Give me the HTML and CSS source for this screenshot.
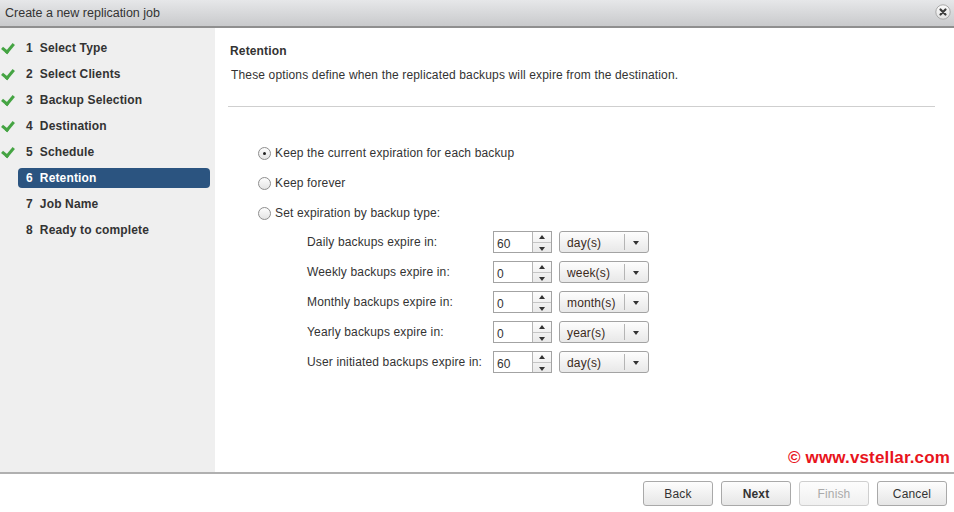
FILE: index.html
```html
<!DOCTYPE html>
<html lang="en">
<head>
    <meta charset="UTF-8">
    <title>Create a new replication job</title>
    <link rel="stylesheet" href="styles.css">
</head>
<body>
    <div class="dialog">
        <div class="titlebar">
            <span class="title">Create a new replication job</span>
            <span class="close">
                <svg width="16" height="16" viewBox="0 0 16 16">
                    <defs>
                        <linearGradient id="closeFill" x1="0" y1="0" x2="0" y2="1">
                            <stop offset="0" stop-color="#fbfbfb"/>
                            <stop offset="1" stop-color="#e2e2e2"/>
                        </linearGradient>
                    </defs>
                    <circle cx="8" cy="8" r="7.2" fill="url(#closeFill)" stroke="#a9a9a9" stroke-width="1"/>
                    <path d="M5.5 5.5 L10.5 10.5 M10.5 5.5 L5.5 10.5" stroke="#3c3c3c" stroke-width="2.2" stroke-linecap="round"/>
                </svg>
            </span>
        </div>

        <div class="body">
            <ul class="steps">
                <li class="step done"><span class="check"></span><span class="step-label"><b>1</b>Select Type</span></li>
                <li class="step done"><span class="check"></span><span class="step-label"><b>2</b>Select Clients</span></li>
                <li class="step done"><span class="check"></span><span class="step-label"><b>3</b>Backup Selection</span></li>
                <li class="step done"><span class="check"></span><span class="step-label"><b>4</b>Destination</span></li>
                <li class="step done"><span class="check"></span><span class="step-label"><b>5</b>Schedule</span></li>
                <li class="step current"><span class="check"></span><span class="step-label"><b>6</b>Retention</span></li>
                <li class="step"><span class="check"></span><span class="step-label"><b>7</b>Job Name</span></li>
                <li class="step"><span class="check"></span><span class="step-label"><b>8</b>Ready to complete</span></li>
            </ul>

            <div class="content">
                <h2 class="heading">Retention</h2>
                <p class="desc">These options define when the replicated backups will expire from the destination.</p>
                <hr class="divider">

                <div class="options">
                    <label class="option"><span class="radio checked"></span>Keep the current expiration for each backup</label>
                    <label class="option"><span class="radio"></span>Keep forever</label>
                    <label class="option"><span class="radio"></span>Set expiration by backup type:</label>
                </div>

                <div class="expiry">
                    <div class="expiry-row">
                        <span class="expiry-label">Daily backups expire in:</span>
                        <span class="spinner"><span class="spin-value">60</span><span class="spin-btns"><span class="up"></span><span class="down"></span></span></span>
                        <span class="select"><span class="select-value">day(s)</span><span class="select-arrow"></span></span>
                    </div>
                    <div class="expiry-row">
                        <span class="expiry-label">Weekly backups expire in:</span>
                        <span class="spinner"><span class="spin-value">0</span><span class="spin-btns"><span class="up"></span><span class="down"></span></span></span>
                        <span class="select"><span class="select-value">week(s)</span><span class="select-arrow"></span></span>
                    </div>
                    <div class="expiry-row">
                        <span class="expiry-label">Monthly backups expire in:</span>
                        <span class="spinner"><span class="spin-value">0</span><span class="spin-btns"><span class="up"></span><span class="down"></span></span></span>
                        <span class="select"><span class="select-value">month(s)</span><span class="select-arrow"></span></span>
                    </div>
                    <div class="expiry-row">
                        <span class="expiry-label">Yearly backups expire in:</span>
                        <span class="spinner"><span class="spin-value">0</span><span class="spin-btns"><span class="up"></span><span class="down"></span></span></span>
                        <span class="select"><span class="select-value">year(s)</span><span class="select-arrow"></span></span>
                    </div>
                    <div class="expiry-row">
                        <span class="expiry-label">User initiated backups expire in:</span>
                        <span class="spinner"><span class="spin-value">60</span><span class="spin-btns"><span class="up"></span><span class="down"></span></span></span>
                        <span class="select"><span class="select-value">day(s)</span><span class="select-arrow"></span></span>
                    </div>
                </div>

                <div class="watermark">&copy; www.vstellar.com</div>
            </div>
        </div>

        <div class="footer">
            <button class="btn">Back</button>
            <button class="btn primary">Next</button>
            <button class="btn" disabled>Finish</button>
            <button class="btn">Cancel</button>
        </div>
    </div>
</body>
</html>
```

FILE: styles.css
```css
body {
    margin: 0;
    font-family: 'Liberation Sans', Arial, sans-serif;
    font-size: 12px;
    letter-spacing: 0.15px;
    color: #333;
    background: #fff;
}

.dialog {
    width: 954px;
    height: 512px;
    display: flex;
    flex-direction: column;
    overflow: hidden;
}

.titlebar {
    height: 26px;
    flex-shrink: 0;
    display: flex;
    align-items: center;
    justify-content: space-between;
    padding: 0 3px 0 5px;
    background: linear-gradient(#e6e7e9, #c9cacc);
    border-bottom: 2px solid #8f8f8f;
}

.title {
    font-size: 12.5px;
    letter-spacing: 0;
    color: #333;
    padding-bottom: 1px;
}

.close {
    display: flex;
    margin-top: -3px;
}

.body {
    flex: 1;
    display: flex;
    min-height: 0;
}

/* wizard steps */
.steps {
    list-style: none;
    margin: 0;
    padding: 10px 5px 0 0;
    width: 210px;
    background: #efefef;
}

.step {
    display: flex;
    align-items: center;
    height: 20px;
    margin-bottom: 6px;
    font-weight: bold;
    color: #333;
}

.check {
    width: 18px;
    height: 20px;
    flex-shrink: 0;
    position: relative;
}

.step.done .check::after {
    content: "";
    position: absolute;
    left: 4px;
    top: 3px;
    width: 5px;
    height: 9px;
    border-right: 3px solid #45a443;
    border-bottom: 3px solid #45a443;
    transform: rotate(40deg);
}

.step-label {
    flex: 1;
    height: 20px;
    line-height: 20px;
    padding-left: 8px;
    border-radius: 4px;
}

.step-label b {
    margin-right: 7px;
}

.step.current .step-label {
    background: #2b5480;
    color: #fff;
}

/* content */
.content {
    flex: 1;
    display: flex;
    flex-direction: column;
    padding: 16px 4px 4px 15px;
}

.heading {
    margin: 0;
    font-size: 12px;
    font-weight: bold;
    line-height: 14px;
}

.desc {
    margin: 10px 0 0 1px;
    line-height: 14px;
}

.divider {
    margin: 24px 15px 0 -2px;
    border: 0;
    border-top: 1px solid #cfcfcf;
}

.options {
    margin: 39px 0 0 28px;
    display: flex;
    flex-direction: column;
    gap: 16px;
}

.option {
    display: flex;
    align-items: center;
    height: 14px;
}

.radio {
    width: 11px;
    height: 11px;
    border: 1px solid #8e8e8e;
    border-radius: 50%;
    background: linear-gradient(#fdfdfd, #e4e4e4);
    margin-right: 4px;
    position: relative;
}

.radio.checked::after {
    content: "";
    position: absolute;
    left: 4px;
    top: 4px;
    width: 3px;
    height: 3px;
    border-radius: 50%;
    background: #222;
}

.expiry {
    margin: 11px 0 0 77px;
    display: flex;
    flex-direction: column;
    gap: 8px;
}

.expiry-row {
    display: flex;
    align-items: center;
    height: 22px;
}

.expiry-label {
    width: 186px;
}

.spinner {
    display: flex;
    width: 59px;
    height: 22px;
    box-sizing: border-box;
    border: 1px solid #a3a3a3;
    background: #fff;
}

.spin-value {
    flex: 1;
    padding: 5px 0 0 3px;
}

.spin-btns {
    width: 18px;
    display: flex;
    flex-direction: column;
    border-left: 1px solid #b5b5b5;
    background: linear-gradient(#fcfcfc, #e9e9e9);
}

.spin-btns span {
    flex: 1;
    position: relative;
}

.spin-btns .up {
    border-bottom: 1px solid #c4c4c4;
}

.spin-btns .up::after,
.spin-btns .down::after {
    content: "";
    position: absolute;
    left: 6px;
    border-left: 3px solid transparent;
    border-right: 3px solid transparent;
}

.spin-btns .up::after {
    top: 3px;
    border-bottom: 4px solid #333;
}

.spin-btns .down::after {
    top: 4px;
    border-top: 4px solid #333;
}

.select {
    display: flex;
    margin-left: 7px;
    width: 90px;
    height: 22px;
    box-sizing: border-box;
    border: 1px solid #a3a3a3;
    border-radius: 3px;
    background: linear-gradient(#fdfdfd, #e8e8e8);
    color: #3b2a1c;
}

.select-value {
    flex: 1;
    padding: 4px 0 0 7px;
}

.select-arrow {
    width: 23px;
    border-left: 1px solid #b5b5b5;
    margin: 2px 0;
    position: relative;
}

.select-arrow::after {
    content: "";
    position: absolute;
    left: 8px;
    top: 7px;
    border-left: 3px solid transparent;
    border-right: 3px solid transparent;
    border-top: 4px solid #333;
}

.watermark {
    margin-top: auto;
    align-self: flex-end;
    font-size: 17px;
    font-weight: bold;
    color: #e8141c;
    padding-bottom: 0;
}

/* footer */
.footer {
    flex-shrink: 0;
    display: flex;
    justify-content: flex-end;
    align-items: flex-start;
    gap: 8px;
    padding: 7px 7px 0 0;
    box-sizing: border-box;
    border-top: 2px solid #b0b0b0;
    height: 40px;
}

.btn {
    width: 70px;
    height: 25px;
    font-family: 'Liberation Sans', Arial, sans-serif;
    font-size: 12px;
    letter-spacing: 0.15px;
    color: #333;
    border: 1px solid #a9a9a9;
    border-radius: 3px;
    background: linear-gradient(#fdfdfd, #e6e6e6);
    padding: 0;
}

.btn.primary {
    font-weight: bold;
}

.btn:disabled {
    color: #aaa;
    border-color: #cfcfcf;
    background: linear-gradient(#fdfdfd, #f0f0f0);
}
```
